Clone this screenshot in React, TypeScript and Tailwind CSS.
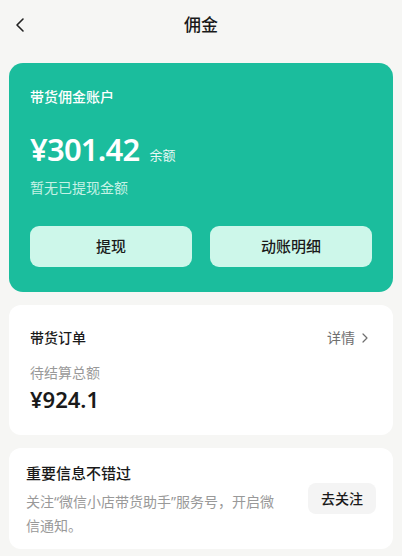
import { ChevronLeft, ChevronRight } from 'lucide-react';

const font = { fontFamily: '"Noto Sans", "Noto Sans CJK SC", sans-serif' };

export default function App() {
  return (
    <div className="w-[402px] h-[556px] overflow-hidden bg-[#f6f6f4] text-[#1a1a1a]" style={font}>
      {/* header */}
      <div className="relative h-[50px] flex items-center justify-center">
        <ChevronLeft className="absolute left-[8px] top-[13px] w-[24px] h-[24px] text-[#222]" strokeWidth={1.6} />
        <span className="text-[17px] font-medium">佣金</span>
      </div>

      <div className="px-[9px] pt-[13px] flex flex-col gap-[13px]">
        {/* account card */}
        <div className="rounded-[14px] bg-[#1bbd9d] px-[21px] pt-[24px] pb-[25px] text-white">
          <div className="text-[14px] leading-[20px] font-medium">带货佣金账户</div>
          <div className="mt-[24px] flex items-end gap-[10px]">
            <span className="text-[31px] leading-[37px] font-semibold tracking-tight">¥301.42</span>
            <span className="text-[13px] leading-[26px] text-white/90">余额</span>
          </div>
          <div className="mt-[10px] text-[14px] leading-[20px] text-[#c6f2e6]">暂无已提现金额</div>
          <div className="mt-[28px] grid grid-cols-2 gap-[18px]">
            <button className="h-[41px] rounded-[9px] bg-[#cdf7ea] text-[15px] font-medium text-[#1a1a1a]">提现</button>
            <button className="h-[41px] rounded-[9px] bg-[#cdf7ea] text-[15px] font-medium text-[#1a1a1a]">动账明细</button>
          </div>
        </div>

        {/* orders card */}
        <div className="h-[130px] rounded-[12px] bg-white pl-[21px] pr-[20px] pt-[23px]">
          <div className="flex items-center justify-between">
            <span className="text-[14px] leading-[20px] font-medium">带货订单</span>
            <span className="flex items-center text-[14px] leading-[20px] text-[#6f6f6f]">
              详情
              <ChevronRight className="ml-[2px] w-[16px] h-[16px]" strokeWidth={1.8} />
            </span>
          </div>
          <div className="mt-[15px] text-[14px] leading-[20px] text-[#999]">待结算总额</div>
          <div className="mt-[2px] text-[22px] leading-[28px] font-semibold">¥924.1</div>
        </div>

        {/* notice card */}
        <div className="h-[101px] rounded-[12px] bg-white pl-[17px] pr-[17px] pt-[14px] flex items-start">
          <div className="w-[262px]">
            <div className="text-[15px] leading-[22px] font-medium">重要信息不错过</div>
            <div className="mt-[6px] text-[14px] leading-[24px] text-[#999]">
              关注“微信小店带货助手”服务号，开启微信通知。
            </div>
          </div>
          <button className="ml-auto mt-[21px] h-[31px] w-[68px] rounded-[8px] bg-[#f4f4f4] text-[14px] font-medium text-[#1a1a1a]">
            去关注
          </button>
        </div>
      </div>
    </div>
  );
}
